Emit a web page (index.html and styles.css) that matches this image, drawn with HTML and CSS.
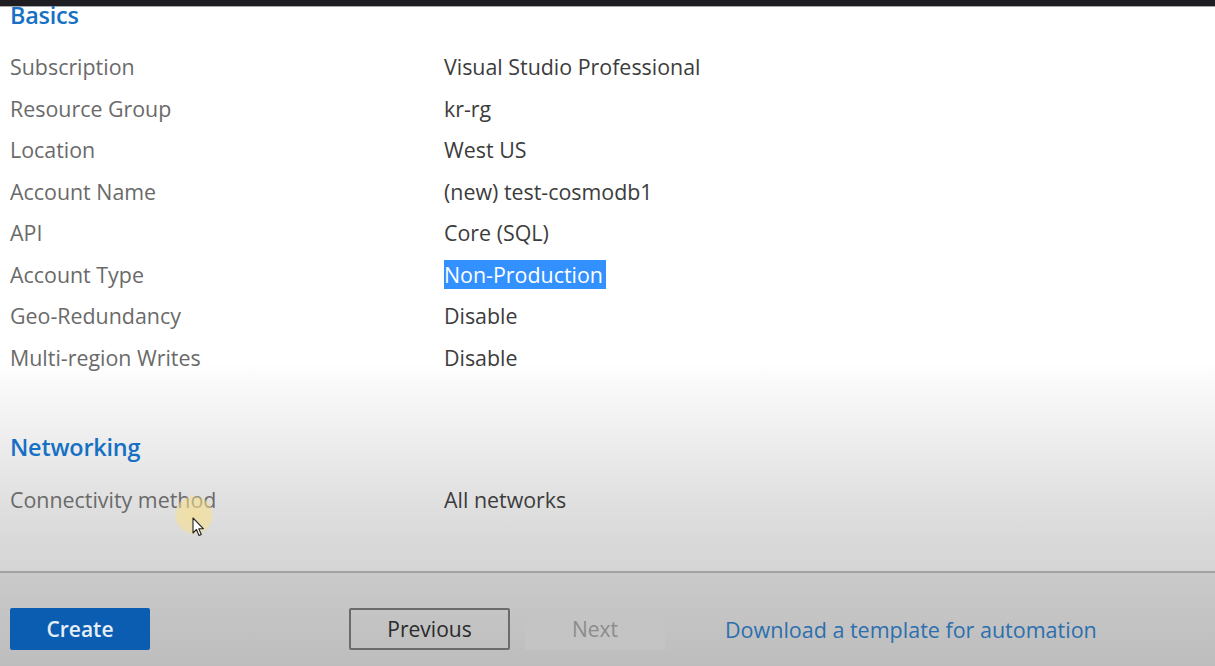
FILE: index.html
```html
<!DOCTYPE html>
<html>
<head>
<meta charset="utf-8">
<link rel="stylesheet" href="styles.css">
</head>
<body>
<div class="topbar"></div>
<div class="page">
  <main class="content">
    <h2 class="section-title basics">Basics</h2>
    <dl class="summary">
      <dt>Subscription</dt><dd>Visual Studio Professional</dd>
      <dt>Resource Group</dt><dd>kr-rg</dd>
      <dt>Location</dt><dd>West US</dd>
      <dt>Account Name</dt><dd>(new) test-cosmodb1</dd>
      <dt>API</dt><dd>Core (SQL)</dd>
      <dt>Account Type</dt><dd><span class="selected">Non-Production</span></dd>
      <dt>Geo-Redundancy</dt><dd>Disable</dd>
      <dt>Multi-region Writes</dt><dd>Disable</dd>
    </dl>
    <h2 class="section-title networking">Networking</h2>
    <dl class="summary">
      <dt class="cursor-host">Connectivity method
        <span class="halo"></span>
        <svg class="cursor" width="13" height="20" viewBox="0 0 13 20"><path d="M1 1 L1 16 L4.5 12.5 L7 18.5 L9.3 17.5 L6.8 11.8 L11.5 11.8 Z" fill="#fff" stroke="#222" stroke-width="1.1" stroke-linejoin="round"/></svg>
      </dt><dd>All networks</dd>
    </dl>
  </main>
  <footer class="footer">
    <button class="btn btn-primary">Create</button>
    <button class="btn btn-outline">Previous</button>
    <button class="btn btn-disabled">Next</button>
    <a class="template-link" href="#">Download a template for automation</a>
  </footer>
</div>
</body>
</html>
```

FILE: styles.css
```css
html, body {
  margin: 0;
  padding: 0;
}
body {
  width: 1215px;
  height: 666px;
  overflow: hidden;
  font-family: "Open Sans", "Noto Sans", "Liberation Sans", sans-serif;
  background: #ffffff;
}
.topbar {
  height: 6px;
  background: #1e1d21;
  border-bottom: 1px solid #a8a8a8;
}
.page {
  height: 659px;
  display: flex;
  flex-direction: column;
  background: linear-gradient(to bottom, #ffffff 0px, #ffffff 355px, #eeeeee 430px, #dddddd 510px, #d5d5d5 564px);
}
.content {
  flex: 1;
  padding-left: 10px;
}
.section-title {
  margin: 0;
  font-weight: 600;
  font-size: 23.4px;
  color: #1670c4;
  letter-spacing: -0.2px;
}
.basics {
  line-height: 16px;
}
.networking {
  line-height: 30px;
  margin-top: 53px;
}
.summary {
  margin: 0;
  display: grid;
  grid-template-columns: 434px 1fr;
  grid-auto-rows: 41.57px;
  font-size: 21.4px;
  line-height: 41.57px;
}
.basics + .summary {
  margin-top: 23px;
}
.networking + .summary {
  margin-top: 17px;
}
.summary dt {
  color: #6a6a6a;
  margin: 0;
}
.summary dd {
  color: #3c3c3c;
  margin: 0;
}
.selected {
  background: #3390ff;
  color: #ffffff;
  padding-right: 3px;
}
.cursor-host {
  position: relative;
}
.halo {
  position: absolute;
  left: 165px;
  top: 17px;
  width: 38px;
  height: 38px;
  border-radius: 50%;
  background: radial-gradient(circle, rgba(248, 224, 140, 0.7) 0%, rgba(248, 224, 140, 0.55) 60%, rgba(248, 224, 140, 0) 100%);
}
.cursor {
  position: absolute;
  left: 182px;
  top: 38px;
}
.footer {
  height: 95px;
  border-top: 2px solid #a2a2a2;
  background: linear-gradient(to bottom, #cacaca, #bdbdbd);
  display: flex;
  align-items: center;
  padding: 19px 0 0 10px;
  box-sizing: border-box;
}
.btn {
  height: 42px;
  box-sizing: border-box;
  font-family: "Open Sans", "Noto Sans", sans-serif;
  font-size: 21px;
  font-weight: 600;
  border-radius: 2px;
  padding: 0;
}
.btn-primary {
  width: 140px;
  background: #0b5db2;
  color: #e6eef6;
  border: none;
}
.btn-outline {
  width: 161px;
  margin-left: 199px;
  background: transparent;
  color: #2a2a2a;
  border: 2px solid #6b6b6b;
  font-weight: 500;
}
.btn-disabled {
  width: 140px;
  margin-left: 15px;
  background: #c4c4c4;
  color: #8c8c8c;
  border: none;
  font-weight: 500;
}
.template-link {
  margin-left: 60px;
  font-size: 21.5px;
  color: #2b6fae;
  text-decoration: none;
}
```
